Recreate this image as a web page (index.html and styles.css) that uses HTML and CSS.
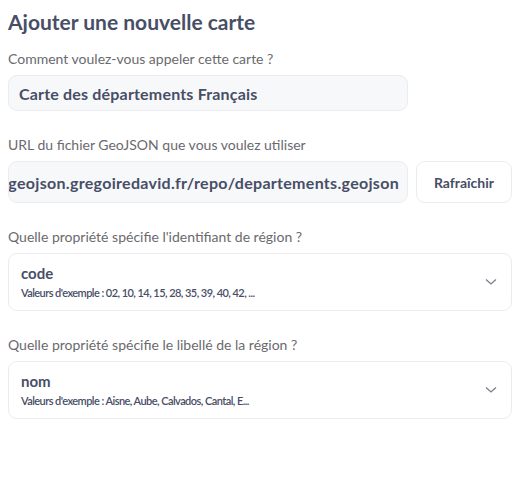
FILE: index.html
```html
<!DOCTYPE html>
<html lang="fr">
<head>
<meta charset="utf-8">
<link rel="stylesheet" href="styles.css">
</head>
<body>
<div class="page">
  <h1 class="title">Ajouter une nouvelle carte</h1>
  <div class="field">
    <label class="label">Comment voulez-vous appeler cette carte ?</label>
    <div class="input input-name">Carte des départements Français</div>
  </div>
  <div class="field">
    <label class="label">URL du fichier GeoJSON que vous voulez utiliser</label>
    <div class="row">
      <div class="input input-url"><span>https://france-geojson.gregoiredavid.fr/repo/departements.geojson</span></div>
      <button class="btn">Rafraîchir</button>
    </div>
  </div>
  <div class="field">
    <label class="label">Quelle propriété spécifie l'identifiant de région ?</label>
    <div class="select">
      <div class="select-body">
        <div class="select-value">code</div>
        <div class="select-hint">Valeurs d'exemple : 02, 10, 14, 15, 28, 35, 39, 40, 42, ...</div>
      </div>
      <svg class="chev" width="12" height="8" viewBox="0 0 12 8"><path d="M1 1.5 L6 6 L11 1.5" fill="none" stroke="#7a7d8c" stroke-width="1.3"/></svg>
    </div>
  </div>
  <div class="field">
    <label class="label">Quelle propriété spécifie le libellé de la région ?</label>
    <div class="select">
      <div class="select-body">
        <div class="select-value">nom</div>
        <div class="select-hint">Valeurs d'exemple : Aisne, Aube, Calvados, Cantal, E...</div>
      </div>
      <svg class="chev" width="12" height="8" viewBox="0 0 12 8"><path d="M1 1.5 L6 6 L11 1.5" fill="none" stroke="#7a7d8c" stroke-width="1.3"/></svg>
    </div>
  </div>
</div>
</body>
</html>
```

FILE: styles.css
```css
* { box-sizing: border-box; }
html, body { margin: 0; background: #fff; }
body { font-family: Lato, "Noto Sans", sans-serif; color: #474e66; }
.page { padding: 8px; width: 520px; display: flex; flex-direction: column; }
.title { margin: 0; font-size: 21px; font-weight: 700; line-height: 28px; color: #474e66; }
.field { display: flex; flex-direction: column; margin-top: 14px; }
.field + .field { margin-top: 25px; }
.label { font-size: 14px; line-height: 18px; color: #6a6a6e; margin-bottom: 7px; }
.input { background: #f7f8fa; border: 1px solid #ececf0; border-radius: 9px; font-size: 16px; font-weight: 700; letter-spacing: 0.18px; color: #474e66; white-space: nowrap; overflow: hidden; }
.input-name { width: 400px; height: 36px; padding: 0 10px; display: flex; align-items: center; }
.row { display: flex; gap: 8px; }
.input-url { width: 400px; height: 42px; padding: 0 8px; display: flex; align-items: center; justify-content: flex-end; letter-spacing: 0.3px; }
.input-url span { flex: none; }
.btn { width: 96px; height: 42px; background: #fff; border: 1px solid #ececf0; border-radius: 9px; font-family: inherit; font-size: 14px; font-weight: 700; color: #474e66; padding: 0; }
.select { width: 504px; height: 58px; border: 1px solid #ececf0; border-radius: 9px; display: flex; align-items: center; padding: 0 14px 0 12px; }
.select-body { flex: 1; display: flex; flex-direction: column; gap: 4px; }
.select-value { font-size: 15px; font-weight: 700; line-height: 18px; color: #474e66; }
.select-hint { font-size: 11px; font-weight: 600; line-height: 14px; letter-spacing: -0.55px; color: #474e66; }
.chev { flex: none; }
```
